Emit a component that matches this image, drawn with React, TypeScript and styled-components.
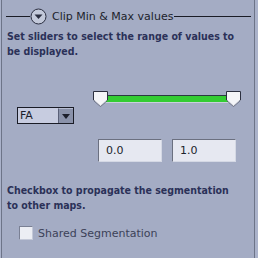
import React from "react";
import styled, {createGlobalStyle} from "styled-components";

const GlobalStyle = createGlobalStyle`
  html, body {
    margin: 0;
    padding: 0;
    background: #aab2ca;
  }
`;

const ThumbShape = ({side}: {side: "left" | "right"}) => (
    <Thumb width="16" height="16" viewBox="0 0 16 16" side={side}>
        <path d="M0.5 0.5 H14.5 V9 L7.5 15.5 L0.5 9 Z" fill="#f4f5f8" stroke="#2c3040"/>
        <path d="M1.5 9.5 L7.5 15 L13.5 9.5" fill="none" stroke="#b8bccb"/>
    </Thumb>
);

const App = () => {
    return (
        <Root>
            <GlobalStyle/>
            <Panel>
                <Header>
                    <Rule width={24}/>
                    <CollapseIcon width="17" height="17" viewBox="0 0 17 17">
                        <circle cx="8.5" cy="8.5" r="7.5" fill="#c3c9da" stroke="#2a2e40" strokeWidth="1"/>
                        <path d="M4.5 6.5 L12.5 6.5 L8.5 11 Z" fill="#2a2e40"/>
                    </CollapseIcon>
                    <Title>Clip Min &amp; Max values</Title>
                    <Rule/>
                </Header>
                <Info>Set sliders to select the range of values to be displayed.</Info>
                <SliderArea>
                    <SliderRow>
                        <RangeTrack>
                            <ThumbShape side="left"/>
                            <ThumbShape side="right"/>
                        </RangeTrack>
                    </SliderRow>
                    <ComboRow>
                        <Combo>
                            <ComboText>FA</ComboText>
                            <ComboButton>
                                <svg width="8" height="5" viewBox="0 0 8 5">
                                    <path d="M0 0 H8 L4 5 Z" fill="#1c1f2c"/>
                                </svg>
                            </ComboButton>
                        </Combo>
                    </ComboRow>
                    <FieldRow>
                        <Field>0.0</Field>
                        <Field>1.0</Field>
                    </FieldRow>
                </SliderArea>
                <Info top={21} right={16}>Checkbox to propagate the segmentation to other maps.</Info>
                <CheckRow>
                    <CheckBox/>
                    <CheckLabel>Shared Segmentation</CheckLabel>
                </CheckRow>
            </Panel>
        </Root>
    );
};

export default App;

const Root = styled.div`
  width: 258px;
  height: 258px;
  overflow: hidden;
  background: #aab2ca;
  padding-left: 1px;
  box-sizing: border-box;
`;

const Panel = styled.div`
  width: 254px;
  height: 258px;
  box-sizing: border-box;
  background: #a4acc4;
  border-left: 1px solid #6d7488;
  border-right: 1px solid #6d7488;
  display: flex;
  flex-direction: column;
  font-family: "DejaVu Sans", sans-serif;
`;

const Header = styled.div`
  display: flex;
  align-items: center;
  height: 17px;
  margin-top: 8px;
  padding: 0 3px 0 4px;
`;

const Rule = styled.div<{width?: number}>`
  height: 1px;
  background: #1a1c26;
  flex: ${(props) => (props.width ? `0 0 ${props.width}px` : "1 1 auto")};
`;

const CollapseIcon = styled.svg`
  margin: 0 5px 0 0;
  flex: none;
`;

const Title = styled.div`
  font-size: 11px;
  color: #1c1f2c;
  margin-right: 1px;
  white-space: nowrap;
`;

const Info = styled.div<{top?: number; right?: number}>`
  margin: ${(props) => props.top ?? 4}px ${(props) => props.right ?? 8}px 0 5px;
  font-family: "DejaVu Sans Condensed", "DejaVu Sans", sans-serif;
  font-weight: bold;
  font-size: 10.5px;
  line-height: 15px;
  color: #2b3158;
`;

const SliderArea = styled.div`
  display: flex;
  flex-direction: column;
  margin-top: 32px;
`;

const SliderRow = styled.div`
  display: flex;
  padding-left: 91px;
  height: 16px;
`;

const RangeTrack = styled.div`
  position: relative;
  width: 149px;
  height: 16px;
  &::before {
    content: "";
    position: absolute;
    left: 6px;
    right: 6px;
    top: 4px;
    height: 6px;
    background: #33cc33;
    border-top: 1px solid #2a3a40;
    border-bottom: 1px solid #c8d0dc;
  }
`;

const Thumb = styled.svg<{side: "left" | "right"}>`
  position: absolute;
  top: 0;
  ${(props) => (props.side === "left" ? "left: 0;" : "right: 0;")}
`;

const ComboRow = styled.div`
  display: flex;
  padding-left: 15px;
`;

const Combo = styled.div`
  display: flex;
  width: 57px;
  height: 17px;
  box-sizing: border-box;
  border: 1px solid #1a1c26;
  background: #c7cce0;
`;

const ComboText = styled.div`
  flex: 1;
  font-size: 11px;
  line-height: 15px;
  padding-left: 2px;
  color: #1c1f2c;
`;

const ComboButton = styled.div`
  width: 14px;
  display: flex;
  align-items: center;
  justify-content: center;
  background: #8a92aa;
  border-left: 1px solid #5a6078;
  border-top: 1px solid #b6bcd0;
`;

const FieldRow = styled.div`
  display: flex;
  gap: 10px;
  padding-left: 96px;
  margin-top: 15px;
`;

const Field = styled.div`
  width: 64px;
  height: 23px;
  box-sizing: border-box;
  background: #e6e8f1;
  border-top: 1px solid #6b7080;
  border-left: 1px solid #6b7080;
  border-bottom: 1px solid #d4d8e4;
  border-right: 1px solid #d4d8e4;
  font-size: 11px;
  line-height: 21px;
  padding-left: 7px;
  color: #1c1f2c;
`;

const CheckRow = styled.div`
  display: flex;
  align-items: center;
  padding-left: 17px;
  margin-top: 13px;
`;

const CheckBox = styled.div`
  width: 14px;
  height: 14px;
  box-sizing: border-box;
  background: #eceef4;
  border-top: 1px solid #7a8094;
  border-left: 1px solid #7a8094;
  border-bottom: 1px solid #c4c9d8;
  border-right: 1px solid #c4c9d8;
`;

const CheckLabel = styled.div`
  margin-left: 5px;
  font-size: 11px;
  color: #3c4258;
`;
